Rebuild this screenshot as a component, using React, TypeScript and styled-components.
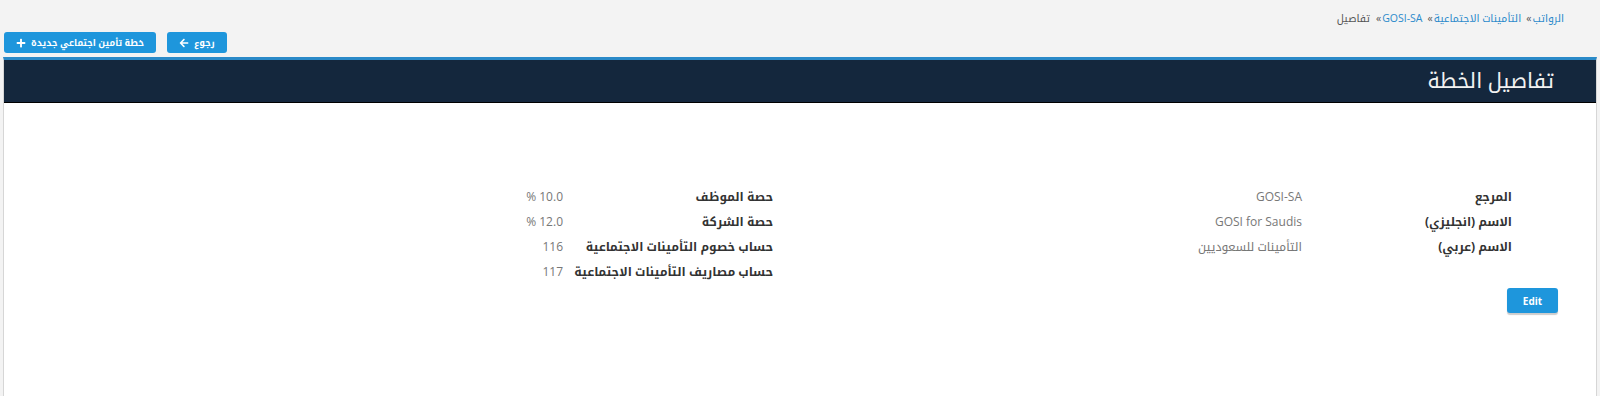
import styled, { createGlobalStyle } from 'styled-components'
import { FaArrowLeft, FaPlus } from 'react-icons/fa'

const GlobalStyle = createGlobalStyle`
  html, body {
    margin: 0;
    padding: 0;
    background: #f3f3f3;
    font-family: 'Open Sans', 'Noto Kufi Arabic', 'Noto Sans Arabic', 'DejaVu Sans', sans-serif;
  }
`

interface Field {
  label: string
  value: string
}

const rightFields: Field[] = [
  { label: 'المرجع', value: 'GOSI-SA' },
  { label: 'الاسم (انجليزي)', value: 'GOSI for Saudis' },
  { label: 'الاسم (عربي)', value: 'التأمينات للسعوديين' },
]

const leftFields: Field[] = [
  { label: 'حصة الموظف', value: '10.0 %' },
  { label: 'حصة الشركة', value: '12.0 %' },
  { label: 'حساب خصوم التأمينات الاجتماعية', value: '116' },
  { label: 'حساب مصاريف التأمينات الاجتماعية', value: '117' },
]

const crumbs = ['الرواتب', 'التأمينات الاجتماعية', 'GOSI-SA']

export default function App() {
  return (
    <Page dir="rtl">
      <GlobalStyle />
      <Breadcrumb>
        {crumbs.map((c) => (
          <span key={c}>
            <CrumbLink>{c}</CrumbLink>
            <Sep>»</Sep>
          </span>
        ))}
        <CrumbCurrent>تفاصيل</CrumbCurrent>
      </Breadcrumb>

      <Toolbar>
        <ActionButton>
          رجوع <FaArrowLeft size={10} />
        </ActionButton>
        <ActionButton>
          خطة تأمين اجتماعي جديدة <FaPlus size={10} />
        </ActionButton>
      </Toolbar>

      <Panel>
        <PanelHeader>
          <PanelTitle>تفاصيل الخطة</PanelTitle>
        </PanelHeader>
        <PanelBody>
          <Details>
            <DetailColumn>
              {rightFields.map((f) => (
                <DetailRow key={f.label}>
                  <DetailLabel>{f.label}</DetailLabel>
                  <DetailValue>{f.value}</DetailValue>
                </DetailRow>
              ))}
            </DetailColumn>
            <DetailColumn>
              {leftFields.map((f) => (
                <DetailRow key={f.label}>
                  <DetailLabel>{f.label}</DetailLabel>
                  <DetailValue>{f.value}</DetailValue>
                </DetailRow>
              ))}
            </DetailColumn>
          </Details>
          <Actions>
            <EditButton>Edit</EditButton>
          </Actions>
        </PanelBody>
      </Panel>
    </Page>
  )
}

const Page = styled.div`
  width: 1600px;
  height: 396px;
  overflow: hidden;
  background: #f3f3f3;
`

const Breadcrumb = styled.div`
  display: flex;
  align-items: center;
  height: 34px;
  padding: 2px 36px 0 0;
  font-size: 10.5px;
  color: #555;
  box-sizing: border-box;
`

const CrumbLink = styled.a`
  color: #2b8acb;
  cursor: pointer;
`

const Sep = styled.span`
  color: #555;
  margin: 0 1px 0 5px;
`

const CrumbCurrent = styled.span`
  color: #555;
  margin-right: 1px;
`

const Toolbar = styled.div`
  display: flex;
  justify-content: flex-end;
  gap: 11px;
  padding-left: 4px;
  margin-top: -2px;
`

const ActionButton = styled.button`
  display: inline-flex;
  align-items: center;
  gap: 5px;
  height: 21px;
  padding: 0 12px;
  border: none;
  border-radius: 3px;
  background: #1e96dc;
  color: #fff;
  font-family: inherit;
  font-size: 9px;
  font-weight: bold;
  cursor: pointer;
`

const Panel = styled.div`
  margin: 4px 3px 0 3px;
  background: #fff;
  border: 1px solid #d6d6d6;
  border-top: 3px solid #2a8ac8;
  height: 400px;
`

const PanelHeader = styled.div`
  display: flex;
  align-items: center;
  height: 42px;
  background: #14273d;
  border-bottom: 1px solid #000;
  padding-right: 42px;
`

const PanelTitle = styled.h2`
  margin: 0;
  color: #f2f2f2;
  font-size: 21px;
  font-weight: normal;
`

const PanelBody = styled.div`
  padding: 81px 38px 0 0;
`

const Details = styled.div`
  display: flex;
  padding-right: 46px;
`

const DetailColumn = styled.div`
  width: 739px;
  display: flex;
  flex-direction: column;
`

const DetailRow = styled.div`
  display: flex;
  align-items: center;
  height: 25px;
`

const DetailLabel = styled.div`
  width: 210px;
  flex-shrink: 0;
  font-size: 12px;
  font-weight: bold;
  color: #333;
`

const DetailValue = styled.div`
  font-size: 12px;
  color: #777;
`

const Actions = styled.div`
  display: flex;
  justify-content: flex-start;
  margin-top: 4px;
`

const EditButton = styled.button`
  width: 51px;
  height: 25px;
  border: none;
  border-radius: 3px;
  background: #1e96dc;
  color: #fff;
  font-family: 'Open Sans', sans-serif;
  font-size: 10px;
  font-weight: bold;
  box-shadow: 0 2px 1px #ccc;
  cursor: pointer;
`
